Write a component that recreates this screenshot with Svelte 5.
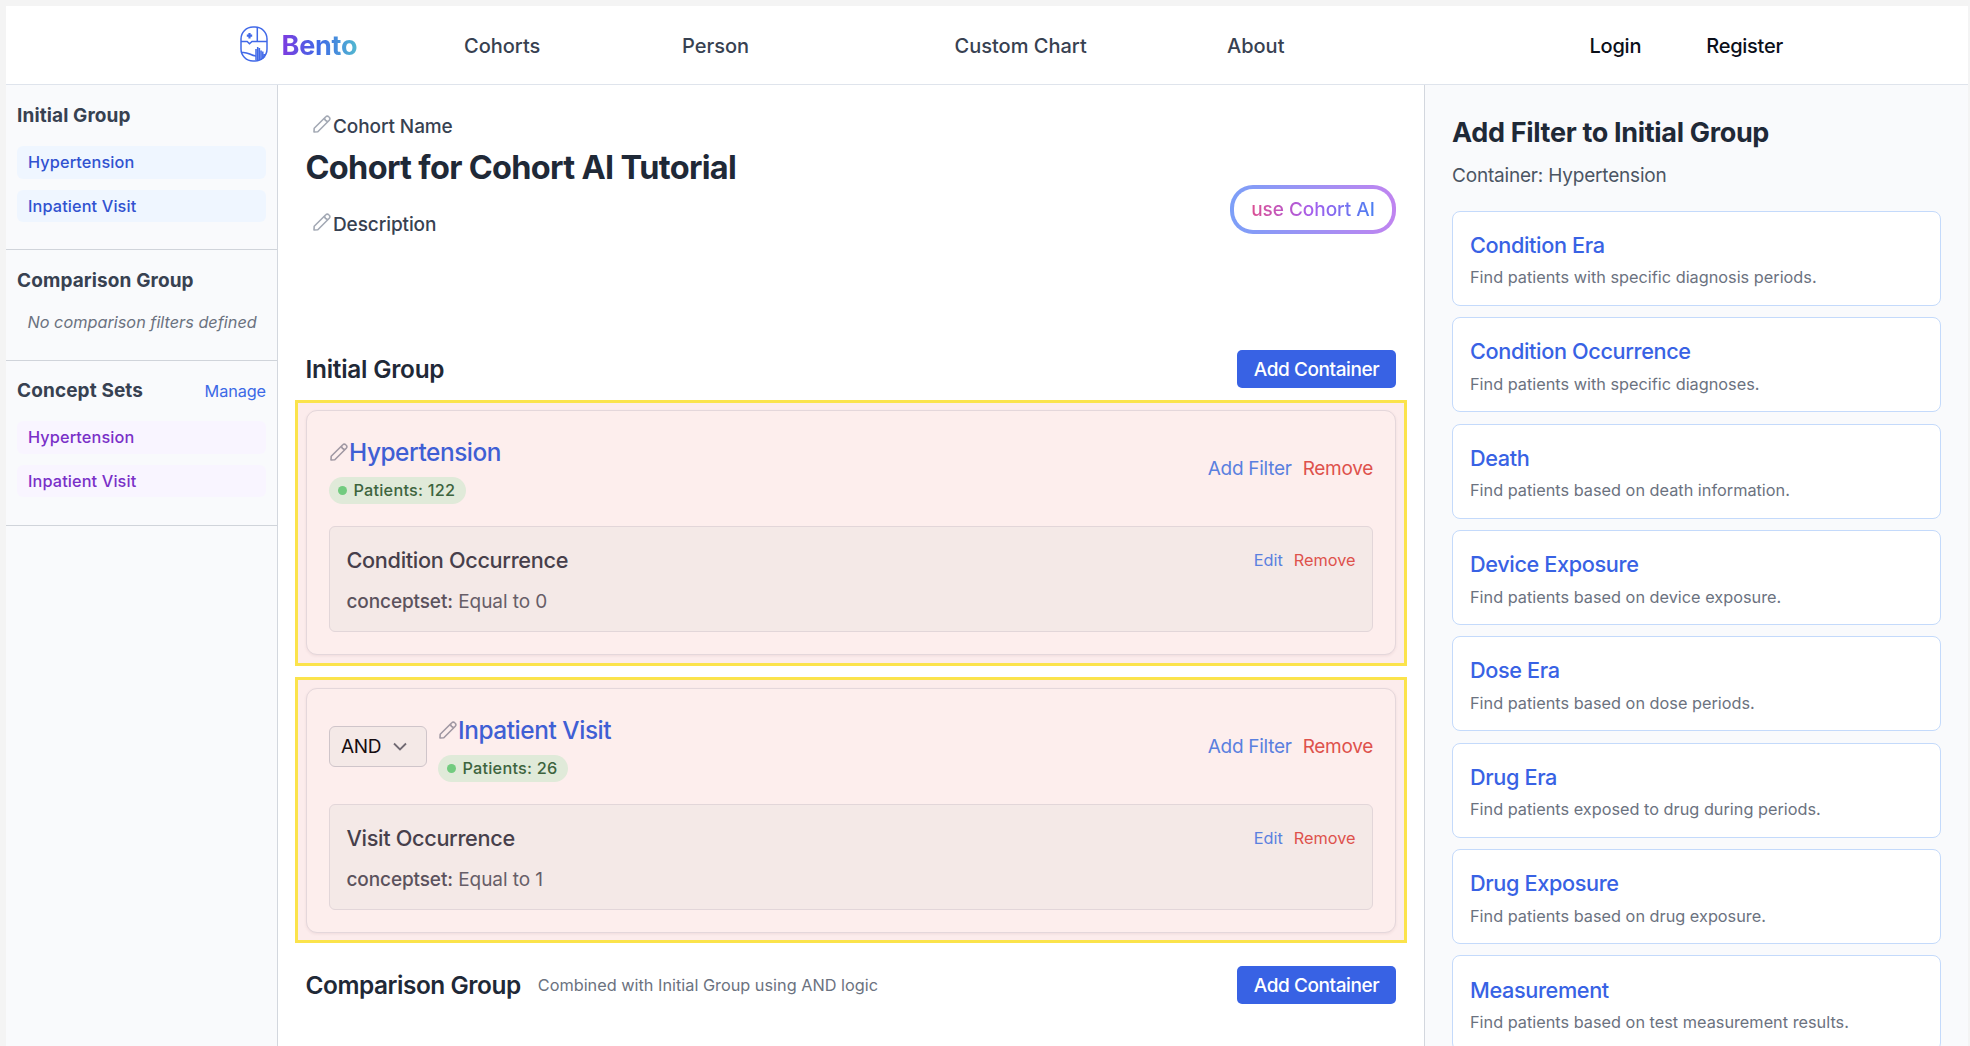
<script>
  const groupItems = ['Hypertension', 'Inpatient Visit'];
  const conceptSets = ['Hypertension', 'Inpatient Visit'];
  const containers = [
    { name: 'Hypertension', patients: 122, filter: 'Condition Occurrence', value: 'Equal to 0', operator: null },
    { name: 'Inpatient Visit', patients: 26, filter: 'Visit Occurrence', value: 'Equal to 1', operator: 'AND' }
  ];
  const filters = [
    { title: 'Condition Era', text: 'Find patients with specific diagnosis periods.' },
    { title: 'Condition Occurrence', text: 'Find patients with specific diagnoses.' },
    { title: 'Death', text: 'Find patients based on death information.' },
    { title: 'Device Exposure', text: 'Find patients based on device exposure.' },
    { title: 'Dose Era', text: 'Find patients based on dose periods.' },
    { title: 'Drug Era', text: 'Find patients exposed to drug during periods.' },
    { title: 'Drug Exposure', text: 'Find patients based on drug exposure.' },
    { title: 'Measurement', text: 'Find patients based on test measurement results.' }
  ];
</script>

{#snippet pencil()}
  <svg class="pencil" viewBox="0 0 18 18" aria-hidden="true">
    <path d="M1 17 1.2 13.2 12.8 1.7a2 2 0 0 1 2.9 0l.6.6a2 2 0 0 1 0 2.9L4.8 16.8Z" />
    <path d="M11.4 3.2c.3 2 1.4 3.1 3.4 3.4" />
  </svg>
{/snippet}

<div class="page">
  <header class="topbar">
    <a class="brand" href="#home">
      <svg class="logo" viewBox="0 0 28 36" aria-hidden="true">
        <rect x="1" y="1" width="26" height="34" rx="12" />
        <path d="M17.3 1V15.5M1 15.5H7.2L9.5 17.8 12 15.5H27" />
        <path d="M9.5 7v5.4M6.8 9.7h5.4" stroke-width="2.2" />
        <path d="M2 26.5C8 25.5 10 29.5 16 30" />
        <path d="M16 34V23M17.7 34V21M19.4 34V22M21.1 34V24.5M22.8 33V25.5M24.4 31.5V28" />
      </svg>
      <span class="brand-name">Bento</span>
    </a>
    <nav class="links">
      <a href="#cohorts">Cohorts</a>
      <a href="#person">Person</a>
      <a href="#chart">Custom Chart</a>
      <a href="#about">About</a>
    </nav>
    <div class="account">
      <a href="#login">Login</a>
      <a href="#register">Register</a>
    </div>
  </header>

  <div class="columns">
    <aside class="sidebar">
      <section class="side-section tall">
        <h3>Initial Group</h3>
        <div class="chips">
          {#each groupItems as item}<div class="chip blue">{item}</div>{/each}
        </div>
      </section>
      <section class="side-section short">
        <h3>Comparison Group</h3>
        <p class="none">No comparison filters defined</p>
      </section>
      <section class="side-section tall last">
        <div class="side-head">
          <h3>Concept Sets</h3>
          <a href="#manage">Manage</a>
        </div>
        <div class="chips">
          {#each conceptSets as item}<div class="chip purple">{item}</div>{/each}
        </div>
      </section>
    </aside>

    <main class="main">
      <div class="intro">
        <div>
          <div class="label">{@render pencil()}<span>Cohort Name</span></div>
          <h1>Cohort for Cohort AI Tutorial</h1>
          <div class="label">{@render pencil()}<span>Description</span></div>
        </div>
        <button class="ai"><span>use Cohort AI</span></button>
      </div>

      <div class="group-head">
        <h2 class="wide">Initial Group</h2>
        <button class="add">Add Container</button>
      </div>

      {#each containers as c}
        <div class="highlight">
          <div class="container">
            <div class="container-head">
              {#if c.operator}
                <button class="operator">
                  {c.operator}
                  <svg viewBox="0 0 16 10" aria-hidden="true"><path d="M2 1.5 8 7.5 14 1.5" /></svg>
                </button>
              {/if}
              <div class="identity">
                <div class="title">{@render pencil()}<span>{c.name}</span></div>
                <div class="patients"><i></i><span>Patients: {c.patients}</span></div>
              </div>
              <div class="actions">
                <a href="#add">Add Filter</a>
                <a class="remove" href="#remove">Remove</a>
              </div>
            </div>
            <div class="filter">
              <div class="filter-head">
                <h4>{c.filter}</h4>
                <div class="actions small">
                  <a href="#edit">Edit</a>
                  <a class="remove" href="#remove">Remove</a>
                </div>
              </div>
              <p><b>conceptset:</b> {c.value}</p>
            </div>
          </div>
        </div>
      {/each}

      <div class="group-head second">
        <h2>Comparison Group</h2>
        <span class="hint">Combined with Initial Group using AND logic</span>
        <button class="add">Add Container</button>
      </div>
    </main>

    <aside class="panel">
      <h2>Add Filter to Initial Group</h2>
      <p class="target">Container: Hypertension</p>
      <div class="cards">
        {#each filters as f}
          <div class="card">
            <h4>{f.title}</h4>
            <p>{f.text}</p>
          </div>
        {/each}
      </div>
    </aside>
  </div>
</div>

<style>
  :global(body) {
    background: #f4f4f4;
    overflow: hidden;
  }
  .page {
    box-sizing: border-box;
    display: flex;
    flex-direction: column;
    height: 1046px;
    padding: 6px 2px 0 6px;
    overflow: hidden;
    font-family: Inter, 'Liberation Sans', sans-serif;
    font-size: 19px;
    line-height: 28px;
    color: #374151;
    white-space: nowrap;
  }
  .page * {
    box-sizing: border-box;
  }
  h1, h2, h3, h4, p {
    margin: 0;
  }
  a {
    color: inherit;
    text-decoration: none;
  }
  button {
    font: inherit;
    padding: 0;
    border: 0;
  }

  .topbar {
    flex: none;
    display: flex;
    align-items: center;
    height: 79px;
    padding: 1px 185px 0 234px;
    background: #fff;
    border-bottom: 1px solid #dfe4ec;
    font-size: 20px;
    font-weight: 500;
  }
  .brand {
    display: flex;
    align-items: center;
    gap: 13.5px;
    width: 224px;
  }
  .logo {
    width: 28px;
    height: 36px;
    margin-top: -3px;
    fill: none;
    stroke: #4169e8;
    stroke-width: 1.5;
  }
  .brand-name {
    font-size: 27px;
    font-weight: 700;
    letter-spacing: -0.008em;
    background: linear-gradient(90deg, #7e3be0, #3e6be6 50%, #52b8d0);
    background-clip: text;
    color: transparent;
  }
  .links {
    display: grid;
    grid-template-columns: 218px 272.5px 272.5px auto;
    padding-top: 1px;
  }
  .account {
    display: flex;
    gap: 65px;
    margin-left: auto;
    padding-top: 1px;
    color: #0b0f19;
    letter-spacing: -0.012em;
  }

  .columns {
    flex: 1;
    display: grid;
    grid-template-columns: 272px 1146px 1fr;
    min-height: 0;
  }

  .sidebar {
    background: #f9fafc;
    border-right: 1px solid #d3d7de;
  }
  .side-section {
    padding: 17px 11px 0;
    border-bottom: 1px solid #d0d4da;
  }
  .side-section.tall {
    height: 165px;
  }
  .side-section.short {
    height: 111px;
  }
  .side-section.last {
    height: 165px;
    padding-top: 16px;
  }
  .side-section h3 {
    font-size: 19px;
    font-weight: 650;
    letter-spacing: 0.006em;
  }
  .side-head {
    display: flex;
    justify-content: space-between;
  }
  .side-head a {
    font-size: 16.3px;
    color: #3c69e6;
    letter-spacing: -0.007em;
  }
  .chips {
    display: grid;
    gap: 11px;
    margin-top: 16px;
  }
  .chip {
    height: 32.5px;
    padding-left: 11px;
    border-radius: 6px;
    font-size: 16.3px;
    font-weight: 500;
    line-height: 32.5px;
    letter-spacing: 0.007em;
  }
  .blue {
    background: #eff6ff;
    color: #3152d0;
  }
  .purple {
    background: #f9f5ff;
    color: #7a30c8;
  }
  .none {
    margin-top: 13px;
    padding-left: 10.5px;
    font-size: 16.3px;
    font-style: italic;
    color: #6b7280;
  }

  .main {
    padding: 28px 28px 0;
    background: #fff;
  }
  .intro {
    display: flex;
    justify-content: space-between;
    align-items: flex-start;
    height: 237px;
  }
  .pencil {
    flex: none;
    width: 18px;
    height: 18px;
    fill: none;
    stroke: #a3a9b4;
    stroke-width: 1.6;
    stroke-linejoin: round;
  }
  .label {
    display: flex;
    height: 28px;
    padding-left: 7px;
    gap: 2px;
    font-weight: 500;
    letter-spacing: -0.005em;
  }
  .label .pencil {
    margin-top: 2px;
  }
  h1 {
    margin: 7px 0 23px -0.5px;
    font-size: 32.5px;
    font-weight: 700;
    line-height: 40px;
    letter-spacing: -0.021em;
    color: #1f2937;
  }
  .ai {
    width: 166px;
    height: 49px;
    margin-top: 72px;
    border: 4px solid transparent;
    border-radius: 23px;
    background:
      linear-gradient(#fff, #fff) padding-box,
      linear-gradient(90deg, #7c9ff8, #c084f0) border-box;
    font-weight: 500;
  }
  .ai span {
    letter-spacing: -0.002em;
    background: linear-gradient(90deg, #db4f92, #a45fee 50%, #4a80f2);
    background-clip: text;
    color: transparent;
  }

  .group-head {
    display: flex;
    align-items: center;
    height: 38px;
    margin-bottom: 12px;
  }
  .group-head.second {
    margin-top: 23px;
  }
  .group-head h2 {
    margin-left: -0.5px;
    font-size: 24.4px;
    font-weight: 600;
    letter-spacing: -0.018em;
    color: #1f2937;
  }
  .group-head h2.wide {
    letter-spacing: -0.01em;
  }
  .hint {
    margin-left: 17px;
    font-size: 16.3px;
    color: #6b7280;
  }
  .add {
    width: 159px;
    height: 38px;
    margin-left: auto;
    padding-top: 1px;
    border-radius: 5px;
    background: #3862e4;
    color: #fff;
    font-weight: 500;
    letter-spacing: -0.022em;
  }

  .highlight {
    height: 266px;
    margin: 0 -11px;
    padding: 7px 8px;
    border: 3px solid #fbe34b;
    background: #fcecec;
  }
  .highlight + .highlight {
    margin-top: 11px;
    padding-top: 8px;
  }
  .container {
    height: 245px;
    padding: 22px 22px 0;
    border: 1px solid #e4d7db;
    border-radius: 11px;
    background: #fdeeed;
    box-shadow: 0 1px 3px rgba(90, 40, 50, 0.08);
  }
  .container-head {
    display: flex;
    align-items: center;
    height: 71px;
  }
  .operator {
    display: flex;
    align-items: center;
    gap: 11px;
    width: 98px;
    height: 41px;
    margin-right: 11px;
    padding-left: 11px;
    border: 1px solid #cfc5ca;
    border-radius: 6px;
    background: #f4e9e7;
    color: #160d10;
    letter-spacing: -0.02em;
  }
  .operator svg {
    width: 16px;
    height: 10px;
    fill: none;
    stroke: #716a73;
    stroke-width: 1.8;
  }
  .identity {
    margin-right: auto;
    padding-top: 3px;
  }
  .title {
    display: flex;
    align-items: center;
    gap: 1px;
    height: 32px;
    padding-left: 1px;
    font-size: 24.4px;
    font-weight: 500;
    letter-spacing: -0.018em;
    color: #3f5fd4;
  }
  .title .pencil {
    stroke: #a098a3;
  }
  .patients {
    display: inline-flex;
    align-items: center;
    gap: 6.5px;
    height: 27px;
    margin-top: 8.5px;
    padding: 0 11px 0 9px;
    border-radius: 14px;
    background: #e0ead9;
    font-size: 16.3px;
    font-weight: 550;
    letter-spacing: 0.013em;
    color: #3d643e;
    vertical-align: top;
  }
  .patients i {
    width: 9px;
    height: 9px;
    border-radius: 50%;
    background: #72cb7f;
  }
  .actions {
    display: flex;
    gap: 11px;
    padding-top: 1px;
    letter-spacing: -0.015em;
    color: #5a80df;
  }
  .actions.small {
    padding-top: 0;
    font-size: 16.3px;
    letter-spacing: 0;
  }
  .remove {
    color: #de524c;
  }
  .filter {
    height: 106px;
    margin-top: 22px;
    padding: 19px 16.5px 0;
    border: 1px solid #e2d6d9;
    border-radius: 6px;
    background: #f4e9e7;
  }
  .filter-head {
    display: flex;
    justify-content: space-between;
  }
  .filter h4 {
    font-size: 21.7px;
    font-weight: 500;
    letter-spacing: -0.015em;
    color: #473f4b;
  }
  .filter p {
    margin-top: 14px;
    letter-spacing: -0.003em;
    color: #675e68;
  }
  .filter b {
    font-weight: 550;
    color: #5b525d;
    letter-spacing: -0.006em;
  }

  .panel {
    padding: 32px 27px 0 27px;
    border-left: 1px solid #d3d7de;
    background: #f9fafc;
  }
  .panel h2 {
    font-size: 27px;
    font-weight: 700;
    line-height: 32px;
    letter-spacing: -0.012em;
    color: #1f2937;
  }
  .target {
    margin-top: 13px;
    letter-spacing: -0.01em;
    color: #4b5563;
  }
  .cards {
    display: grid;
    gap: 11.2px;
    margin-top: 20.8px;
  }
  .card {
    height: 95.2px;
    padding: 19.2px 16px 0 17px;
    border: 1px solid #c4dafb;
    border-radius: 8px;
    background: #fff;
  }
  .card h4 {
    font-size: 21.7px;
    font-weight: 500;
    letter-spacing: -0.017em;
    color: #3862e4;
  }
  .card p {
    margin-top: 4.5px;
    font-size: 16.3px;
    color: #6b7280;
  }
</style>
